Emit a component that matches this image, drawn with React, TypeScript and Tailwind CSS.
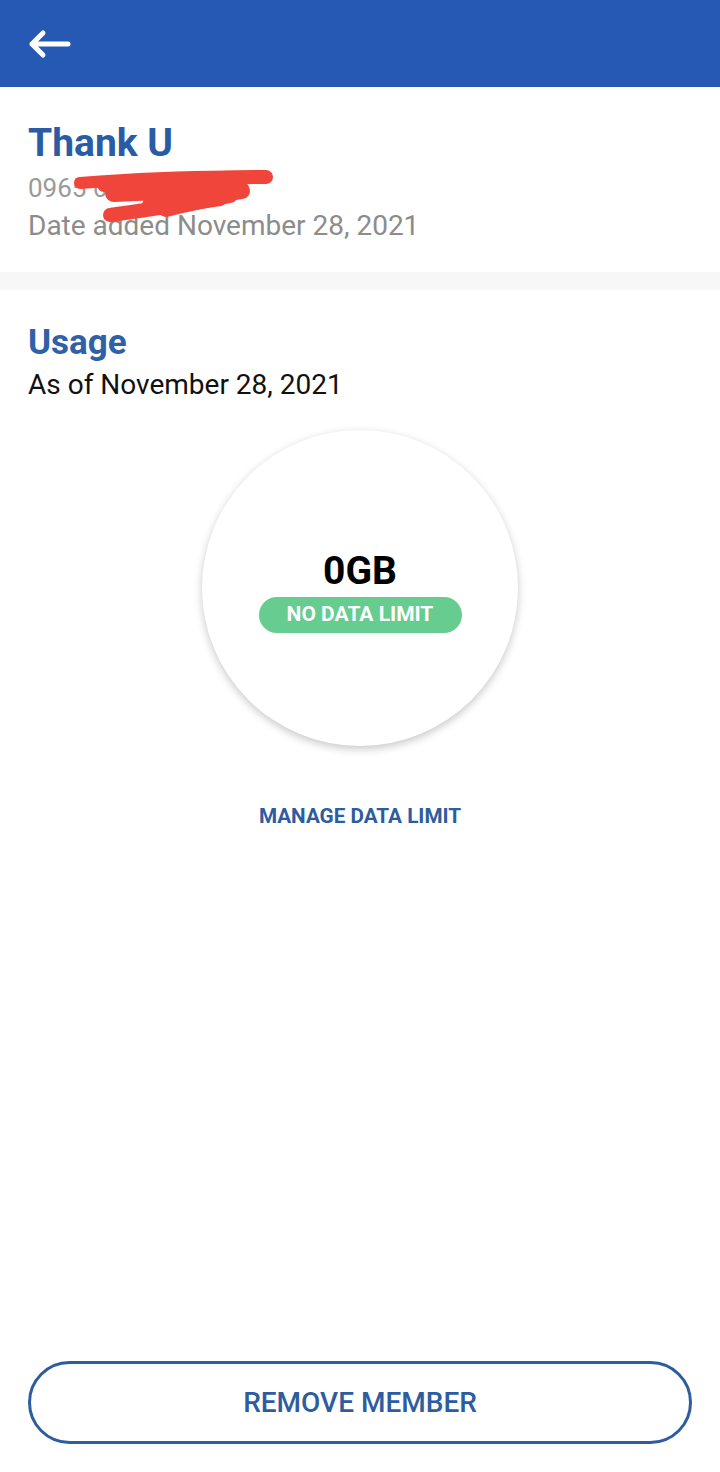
import React from 'react';

const font = { fontFamily: 'Roboto, "Liberation Sans", sans-serif' };

const BackArrow = () => (
  <svg width="44" height="30" viewBox="0 0 44 30" fill="none">
    <path d="M41 15H5M16 4L5 15l11 11" stroke="white" strokeWidth="5" strokeLinecap="round" strokeLinejoin="round" />
  </svg>
);

// red redaction mark drawn over the phone number
const Scribble = () => (
  <svg className="absolute left-[70px] top-[78px]" width="214" height="66" viewBox="0 0 214 66" fill="none">
    <g stroke="#f0453a" strokeLinecap="round" strokeLinejoin="round">
      <path d="M10 18C60 14 130 10 196 12" strokeWidth="12" />
      <path d="M34 20C90 16 150 12 196 12" strokeWidth="14" />
      <path d="M44 28C90 26 140 24 170 24" strokeWidth="18" />
      <path d="M40 50C70 46 110 40 150 34" strokeWidth="14" />
      <path d="M80 40C120 34 150 30 172 26" strokeWidth="16" />
      <path d="M96 44C120 38 140 34 160 30" strokeWidth="16" />
    </g>
  </svg>
);

export default function App() {
  return (
    <div className="w-[720px] h-[1472px] bg-white flex flex-col" style={font}>
      <div className="h-[87px] bg-[#2659b4] flex items-center pl-[27px]">
        <BackArrow />
      </div>

      {/* Member info */}
      <div className="relative px-[28px] pt-[34px] pb-[26px]">
        <h1 className="text-[39px] leading-[44px] font-bold text-[#2a5ca6]">Thank U</h1>
        <p className="text-[26px] leading-[36px] text-[#9a9a9a] mt-[5px]">0965 000 0000</p>
        <p className="text-[28px] leading-[40px] text-[#8c8c8c]">Date added November 28, 2021</p>
        <Scribble />
      </div>

      <div className="h-[18px] bg-[#f7f7f7]" />

      {/* Usage */}
      <div className="px-[28px] pt-[32px]">
        <h2 className="text-[35px] leading-[42px] font-bold text-[#2f61a9]">Usage</h2>
        <p className="text-[28px] leading-[38px] text-[#111] mt-[2px]">As of November 28, 2021</p>
      </div>

      <div className="flex justify-center mt-[26px]">
        <div className="w-[316px] h-[316px] rounded-full bg-white shadow-[0_3px_8px_rgba(0,0,0,0.22)] flex flex-col items-center justify-center">
          <div className="text-[39px] leading-[42px] font-bold text-black mt-[6px]">0GB</div>
          <div className="mt-[5px] w-[203px] h-[36px] rounded-full bg-[#66cc8f] flex items-center justify-center text-white font-bold text-[21px]">
            NO DATA LIMIT
          </div>
        </div>
      </div>

      <div className="flex justify-center mt-[57px]">
        <span className="text-[20.7px] leading-[26px] font-bold text-[#2d5c9f]">MANAGE DATA LIMIT</span>
      </div>

      <div className="flex-1" />

      <div className="px-[28px] pb-[28px]">
        <button className="w-full h-[83px] rounded-full border-[3px] border-[#2d5c9f] bg-white text-[#2d5c9f] text-[28px] font-medium flex items-center justify-center">
          REMOVE MEMBER
        </button>
      </div>
    </div>
  );
}
